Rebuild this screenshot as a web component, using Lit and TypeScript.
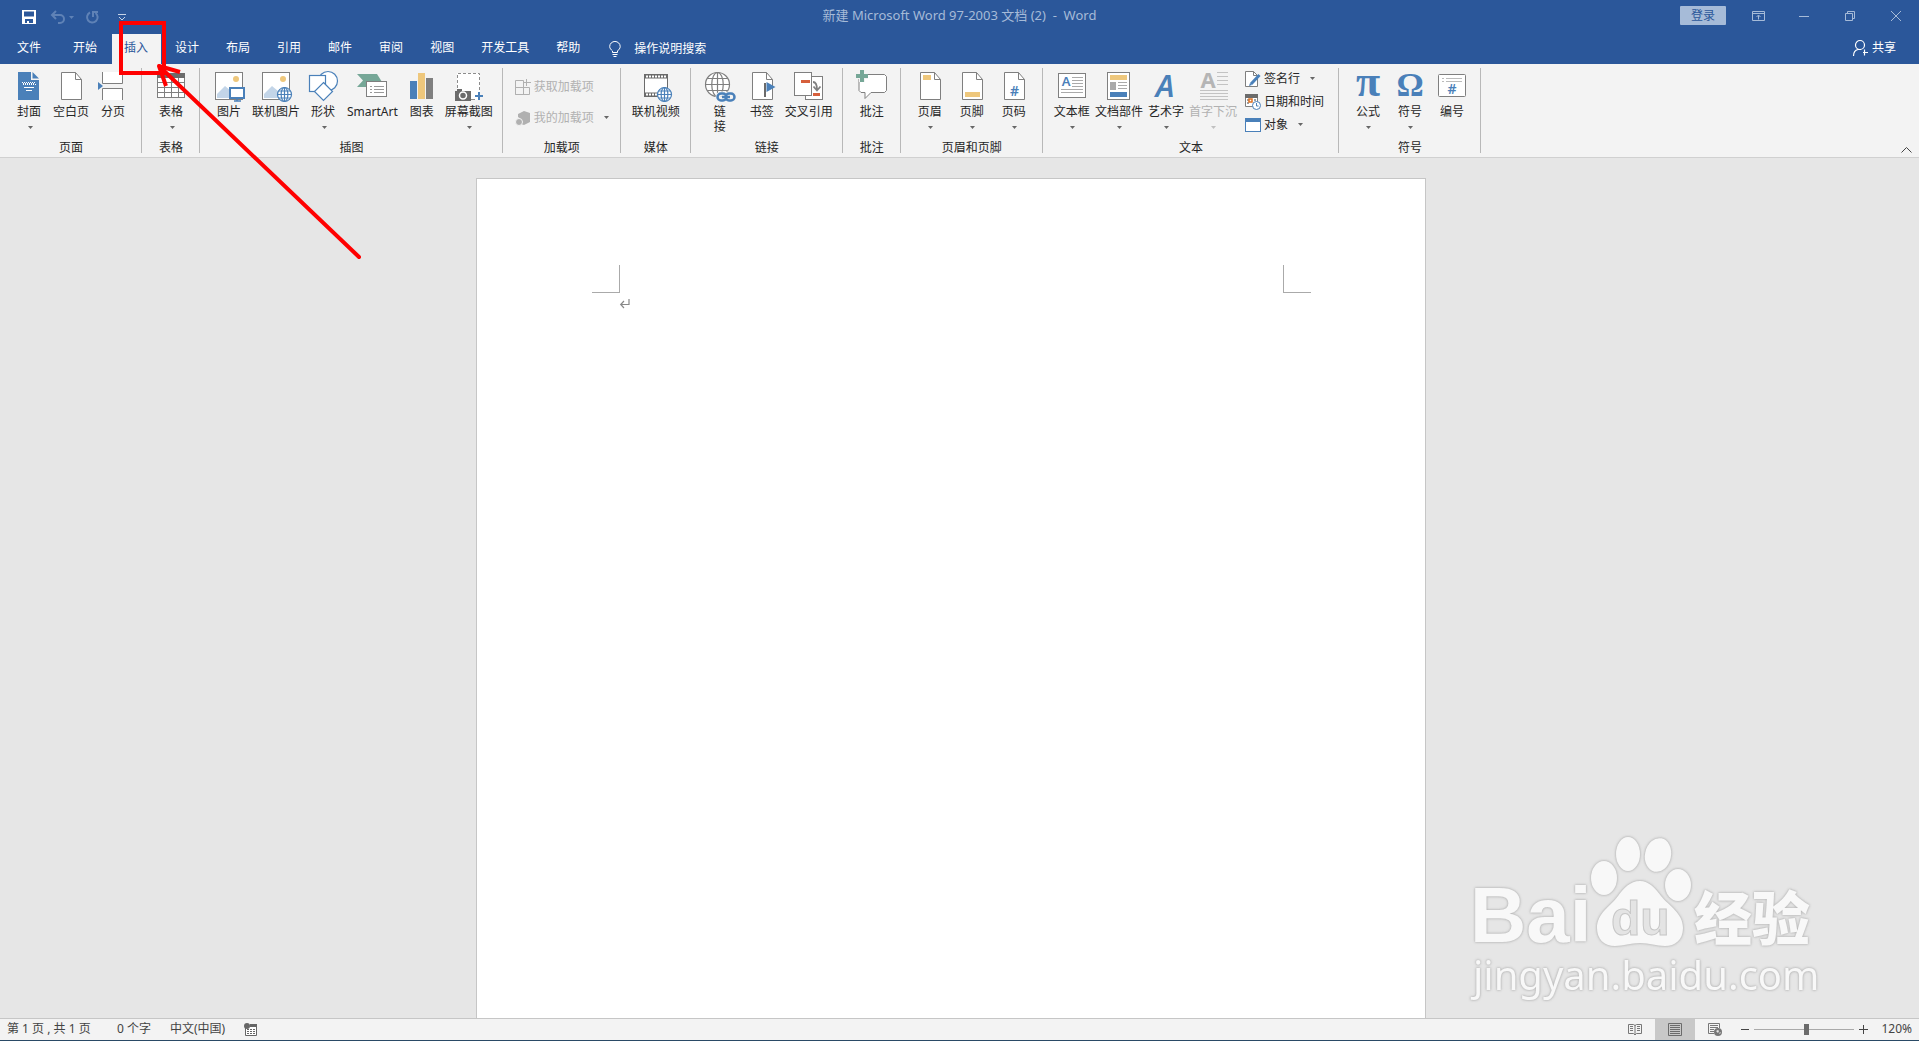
import { LitElement, html, css, svg, nothing } from "lit";
import { customElement, property } from "lit/decorators.js";
import { classMap } from "lit/directives/class-map.js";

const BLUE = "#4a80b9";
const GRAY = "#7f7f7f";
const GOLD = "#eec77c";
const GREEN = "#76a797";
const ORANGE = "#d65f3c";

const globe = (cx: number, cy: number, r: number, color: string) => svg`
  <g fill="none" stroke=${color} stroke-width="1.2">
    <circle cx=${cx} cy=${cy} r=${r} fill="#fff"/>
    <ellipse cx=${cx} cy=${cy} rx=${r * 0.48} ry=${r}/>
    <path d=${`M${cx} ${cy - r}V${cy + r}M${cx - r} ${cy}H${cx + r}M${cx - r * 0.86} ${cy - r / 2}H${cx + r * 0.86}M${cx - r * 0.86} ${cy + r / 2}H${cx + r * 0.86}`}/>
  </g>`;

const sheet = svg`
  <path d="M6.5 2.5h14l6 7v20h-20z" fill="#fff" stroke=${GRAY}/>
  <path d="M20.5 2.5v7h6" fill="none" stroke=${GRAY}/>`;

const photo = svg`
  <rect x="2.5" y="2.5" width="27" height="27" fill="#fff" stroke=${GRAY}/>
  <circle cx="23" cy="9" r="3" fill=${GOLD}/>
  <path d="M4 28v-4l8-8 6 5v7z" fill="#c3d5e8"/>`;

const icons: Record<string, unknown> = {
  cover: svg`
    <path d="M5 2h13v8h8v20H5z" fill=${BLUE}/><path d="M19.500 2v6.500H26z" fill=${BLUE}/>
    <path d="M9 12.500h13M10 14.500h13" stroke="#fff" stroke-dasharray="1 1"/>
    <path d="M9 13.500h13" stroke="#fff" stroke-dasharray="1 1" stroke-dashoffset="1"/>
    <path d="M11 17.500h10M13 20.500h6" stroke="#fff"/>`,
  blank: sheet,
  break: svg`
    <path d="M5.500 2v11.500h20V2" fill="#fff" stroke=${GRAY}/>
    <path d="M5.500 30V18.500h20V30" fill="#fff" stroke=${GRAY}/>
    <path d="M1 12l5 4-5 4z" fill=${BLUE}/>`,
  table: svg`
    <rect x="2.500" y="3.500" width="27" height="24" fill="#fff" stroke=${GRAY}/>
    <rect x="2" y="3" width="28" height="5" fill="#6b6b6b"/>
    <path d="M2 12.500h28M2 17.500h28M2 22.500h28M9.500 8v20M16.500 8v20M23.500 8v20" stroke=${GRAY} fill="none"/>`,
  picture: svg`${photo}
    <rect x="17" y="18" width="14" height="10" fill="#fff" stroke=${BLUE} stroke-width="2"/>
    <path d="M24 29v2M21 31h7" stroke=${BLUE} stroke-width="1.500"/>`,
  onlinePicture: svg`${photo}${globe(24.5, 24.5, 7, BLUE)}`,
  shapes: svg`
    <g fill="#fff" stroke=${BLUE} stroke-width="1.200"><circle cx="21" cy="11" r="9.500"/>
    <rect x="2.500" y="5.500" width="16" height="16"/><path d="M16.500 12.500l9 9-9 9-9-9z"/></g>`,
  smartArt: svg`
    <path d="M1 4h20l5 8-4 5H1l6-6.500z" fill=${GREEN}/>
    <rect x="10.500" y="11.500" width="20" height="15" fill="#fff" stroke=${GRAY}/>
    <path d="M14 16.500h2M14 19.500h2M14 22.500h2M18 16.500h10M18 19.500h10M18 22.500h10" stroke="#999"/>`,
  chart: svg`
    <path d="M4 11h7v18H4z" fill=${BLUE}/><path d="M12 3h7v26h-7z" fill=${GOLD}/>
    <path d="M20 8h7v21h-7z" fill=${GRAY}/>`,
  screenshot: svg`
    <path d="M4 3h23v27H4z" fill="#fff"/>
    <path d="M4.500 18V3.500h22V20" fill="none" stroke="#8c8c8c" stroke-dasharray="3 2"/>
    <path d="M18 29.500h4" stroke="#8c8c8c"/>
    <path d="M4 19h5v2h9v10H2V21h2z" fill="#6b6b6b"/>
    <circle cx="10" cy="25.500" r="3.500" fill="none" stroke="#fff" stroke-width="1.500"/>
    <path d="M26 22v8M22 26h8" stroke=${BLUE} stroke-width="2"/>`,
  video: svg`
    <rect x="4.500" y="4.500" width="23" height="22" fill="#fff" stroke="#6b6b6b"/>
    <path d="M5 6.500h22M5 24.500h22" stroke="#6b6b6b" stroke-width="4"/>
    <path d="M6 6.500h21M6 24.500h21" stroke="#fff" stroke-width="2" stroke-dasharray="2 1"/>
    ${globe(24.5, 24.5, 7, BLUE)}`,
  link: svg`
    ${globe(13.5, 14.5, 12, GRAY)}
    <g fill="none" stroke="#f3f3f3" stroke-width="5"><rect x="14" y="24" width="9" height="6" rx="3"/><rect x="21" y="24" width="9" height="6" rx="3"/></g>
    <g fill="none" stroke=${BLUE} stroke-width="2.500"><rect x="13.500" y="23.500" width="9" height="7" rx="3.500"/><rect x="21.500" y="23.500" width="9" height="7" rx="3.500"/><path d="M18 27h8"/></g>`,
  bookmark: svg`${sheet}
    <path d="M19 13v14" stroke="#6b6b6b" stroke-width="2"/><path d="M20.500 12l9 5-9 5z" fill=${BLUE}/>`,
  crossRef: svg`
    <rect x="12.500" y="6.500" width="17" height="23" fill="#fff" stroke=${GRAY}/>
    <rect x="1.500" y="2.500" width="17" height="23" fill="#fff" stroke=${GRAY}/>
    <path d="M8 10h9v3H8zM20 23h7v3h-7z" fill=${ORANGE}/>
    <path d="M20 12c3 0 4 3 4 8M20.500 16.500l3.500 4 3.500-4" fill="none" stroke=${GRAY} stroke-width="1.800"/>`,
  comment: svg`
    <path d="M4.500 4.500h24l2 2v14l-2 2H15l-6 6v-6H5l-2-2v-14z" fill="#fff" stroke=${GRAY}/>
    <path d="M6 0v12M0 6h12" stroke="#f3f3f3" stroke-width="6"/>
    <path d="M6 0v12M0 6h12" stroke=${GREEN} stroke-width="4"/>`,
  header: svg`${sheet}<path d="M9 5h8v5H9z" fill=${GOLD}/>`,
  footer: svg`${sheet}<path d="M9 22h15v5H9z" fill=${GOLD}/>`,
  pageNumber: svg`${sheet}<text class="glyph hash" x="16.500" y="26">#</text>`,
  textBox: svg`
    <rect x="2.500" y="3.500" width="27" height="24" fill="#fff" stroke=${GRAY}/>
    <text class="glyph letter" x="10" y="16">A</text>
    <path d="M16 7.500h11M16 10.500h11M16 13.500h11M16 16.500h11M5 19.500h22M5 22.500h22" stroke="#aaa"/>`,
  parts: svg`
    <rect x="4.500" y="2.500" width="22" height="27" fill="#fff" stroke=${GRAY}/>
    <path d="M7 5h17v5H7z" fill=${GOLD}/><path d="M7 12h6v8H7z" fill="#aaa"/>
    <path d="M15 12.500h9M15 15.500h9M15 18.500h9" stroke="#aaa"/><path d="M7 22h17v5H7z" fill=${BLUE}/>`,
  wordArt: svg`<text class="glyph art" x="15" y="27">A</text>`,
  dropCap: svg`
    <text class="glyph cap" x="11" y="18">A</text>
    <path d="M20 2.500h11M20 6.500h11M20 10.500h11M20 14.500h11M3 20.500h28M3 23.500h28M3 26.500h28M3 29.500h28" stroke="#c3c3c3"/>`,
  pi: svg`<text class="glyph pi" x="16" y="26">π</text>`,
  omega: svg`<text class="glyph omega" x="16" y="26">Ω</text>`,
  numbering: svg`
    <rect x="2.500" y="4.500" width="27" height="22" rx="1" fill="#fff" stroke=${GRAY}/>
    <path d="M6 8.500h2M10 8.500h16M6 11.500h2M10 11.500h16" stroke="#bbb"/>
    <text class="glyph hash" x="16" y="24">#</text>`,
};

const smallIcons: Record<string, unknown> = {
  getAddins: svg`<path d="M.5 1.500h8v14h-8zM.5 8.500h14v7h-14zM11.500 0v7M8 3.500h8" fill="none" stroke="#b0b0b0"/>`,
  myAddins: svg`<path d="M9 1l6 2v9l-6 3-3-1V9L3 7V4z" fill="#b0b0b0"/><circle cx="4" cy="12" r="3.500" fill="#b0b0b0" stroke="#f3f3f3"/>`,
  signature: svg`
    <path d="M.5 .5h8l4 4v11H.5z" fill="#fff" stroke=${GRAY}/><path d="M8.500 .5v4h4" fill="none" stroke=${GRAY}/>
    <path d="M14.500 4L6 13" stroke=${BLUE} stroke-width="3"/><path d="M4 15l1-3 2 2z" fill=${BLUE}/>`,
  date: svg`
    <path d="M.5 1.500h12v11H.5z" fill="#fff" stroke=${GRAY}/><path d="M0 0h13v4H0z" fill="#6b6b6b"/>
    <path d="M2 6h2M2 9h2M9 6h2" stroke=${GRAY} stroke-width="1.500"/>
    <rect x="4" y="5" width="3" height="3" fill="#fff" stroke="#e07020" stroke-width="1.500"/>
    <circle cx="11.500" cy="11.500" r="4" fill="#fff" stroke=${BLUE}/><path d="M11.500 9v3h2" fill="none" stroke=${BLUE}/>`,
  object: svg`<rect x=".5" y="1.500" width="15" height="13" fill="#fff" stroke=${BLUE}/><path d="M0 1h16v4H0z" fill=${BLUE}/>`,
};

interface Item { icon: string; label: string; menu?: boolean; off?: boolean; narrow?: boolean; wide?: boolean }
interface Group { name: string; items: Item[]; rows?: Item[]; loose?: boolean }

const groups: Group[] = [
  { name: "页面", items: [{ icon: "cover", label: "封面", menu: true }, { icon: "blank", label: "空白页" }, { icon: "break", label: "分页" }] },
  { name: "表格", items: [{ icon: "table", label: "表格", menu: true }] },
  { name: "插图", items: [{ icon: "picture", label: "图片" }, { icon: "onlinePicture", label: "联机图片" }, { icon: "shapes", label: "形状", menu: true }, { icon: "smartArt", label: "SmartArt", wide: true }, { icon: "chart", label: "图表" }, { icon: "screenshot", label: "屏幕截图", menu: true }] },
  { name: "加载项", items: [], loose: true, rows: [{ icon: "getAddins", label: "获取加载项", off: true }, { icon: "myAddins", label: "我的加载项", off: true, menu: true }] },
  { name: "媒体", items: [{ icon: "video", label: "联机视频", wide: true }] },
  { name: "链接", items: [{ icon: "link", label: "链接", narrow: true }, { icon: "bookmark", label: "书签" }, { icon: "crossRef", label: "交叉引用" }] },
  { name: "批注", items: [{ icon: "comment", label: "批注" }] },
  { name: "页眉和页脚", items: [{ icon: "header", label: "页眉", menu: true }, { icon: "footer", label: "页脚", menu: true }, { icon: "pageNumber", label: "页码", menu: true }] },
  { name: "文本", items: [{ icon: "textBox", label: "文本框", menu: true }, { icon: "parts", label: "文档部件", menu: true }, { icon: "wordArt", label: "艺术字", menu: true }, { icon: "dropCap", label: "首字下沉", menu: true, off: true }],
    rows: [{ icon: "signature", label: "签名行", menu: true }, { icon: "date", label: "日期和时间" }, { icon: "object", label: "对象", menu: true }] },
  { name: "符号", items: [{ icon: "pi", label: "公式", menu: true }, { icon: "omega", label: "符号", menu: true }, { icon: "numbering", label: "编号" }] },
];

const base = css`
  * { box-sizing: border-box; }
  button, input { font: inherit; color: inherit; background: none; border: 0; padding: 0; margin: 0; }
  svg { display: block; flex: none; overflow: visible; }
`;

const caret = html`<svg class="caret" width="5" height="3" viewBox="0 0 5 3"><path d="M0 0h5L2.500 3z" fill="currentColor"/></svg>`;

@customElement("ribbon-group")
class RibbonGroup extends LitElement {
  @property({ attribute: false }) group!: Group;

  static styles = [base, css`
    :host { display: flex; flex-direction: column; height: 85px; padding: 0 7px 0 8px; border-right: 1px solid #b8b8b8; }
    .body { display: flex; flex: 1; }
    .big { display: flex; flex-direction: column; align-items: center; min-width: 42px; padding: 2px 2px 0; line-height: 15px; white-space: nowrap; }
    .wide { padding: 2px 3px 0; }
    .big .label { margin-top: 2px; }
    .big .caret { margin: 7px 0 0 2px; }
    .narrow .label { width: 12px; white-space: normal; }
    .caret { color: #666; }
    .off { color: #b1b1b1; }
    .off .caret { color: #c0c0c0; }
    .rows { display: flex; flex-direction: column; padding: 0 7px 0 6px; }
    .row { display: flex; align-items: center; gap: 3px; height: 23px; padding-bottom: 2px; white-space: nowrap; }
    .row .caret { margin-left: 7px; }
    .loose { padding: 3px 4px 0; }
    .loose .row { height: 31px; padding-bottom: 0; }
    .loose .caret { color: #666; }
    .name { text-align: center; line-height: 10px; }
    .glyph { font-family: "Noto Sans", sans-serif; font-weight: 600; text-anchor: middle; fill: #4a80b9; }
    .hash { font-size: 14px; }
    .letter { font-size: 13px; }
    .art { font-size: 31px; font-style: italic; }
    .cap { font-size: 22px; font-weight: 700; fill: #b5b5b5; }
    .pi { font-family: "Liberation Serif", serif; font-size: 44px; font-weight: 700; }
    .omega { font-family: "Liberation Serif", serif; font-size: 34px; font-weight: 700; }
  `];

  render() {
    const { name, items, rows, loose } = this.group;
    return html`
      <div class="body">
        ${items.map((i) => html`
          <button class=${classMap({ big: true, off: !!i.off, narrow: !!i.narrow, wide: !!i.wide })} ?disabled=${i.off}>
            <svg width="32" height="32" viewBox="0 0 32 32">${icons[i.icon]}</svg>
            <span class="label">${i.label}</span>${i.menu ? caret : nothing}
          </button>`)}
        ${rows ? html`<div class=${classMap({ rows: true, loose: !!loose })}>
          ${rows.map((i) => html`
            <button class=${classMap({ row: true, off: !!i.off })} ?disabled=${i.off}>
              <svg width="16" height="16" viewBox="0 0 16 16">${smallIcons[i.icon]}</svg>
              <span>${i.label}</span>${i.menu ? caret : nothing}
            </button>`)}</div>` : nothing}
      </div>
      <div class="name">${name}</div>`;
  }
}

@customElement("baidu-mark")
class BaiduMark extends LitElement {
  static styles = css`
    :host { display: block; }
    svg { display: block; overflow: visible; filter: drop-shadow(0 0 1px #b4b4b4) drop-shadow(0 0 1px #c8c8c8); }
    text { fill: #f8f8f8; }
    .bai { font: 700 78px "Liberation Sans", sans-serif; }
    .du { font: 700 48px "Liberation Sans", sans-serif; fill: #e4e4e4; stroke: #c6c6c6; stroke-width: 1px; }
    .cn { font: 900 58px "Noto Sans CJK SC", sans-serif; }
    .url { font: 400 40px "Noto Sans", sans-serif; }
  `;
  render() {
    return html`<svg width="350" height="170" viewBox="0 0 350 170">
      <text class="bai" x="0" y="108">Bai</text>
      <g fill="#f8f8f8">
        <ellipse cx="134" cy="44" rx="13" ry="17"/>
        <ellipse cx="158" cy="20" rx="12" ry="17"/>
        <ellipse cx="188" cy="21" rx="13" ry="17" transform="rotate(12 188 21)"/>
        <ellipse cx="208" cy="51" rx="13" ry="16"/>
        <path d="M170 47c9 0 15 7 21 15 8 10 22 17 22 32 0 12-8 18-18 18-9 0-15-3-25-3s-16 3-25 3c-11 0-18-7-18-18 0-15 13-21 21-32 6-8 12-15 22-15z"/>
      </g>
      <text class="du" x="141" y="101">du</text>
      <text class="cn" x="224" y="106">经验</text>
      <text class="url" x="3" y="156">jingyan.baidu.com</text>
    </svg>`;
  }
}

@customElement("app-root")
class AppRoot extends LitElement {
  static styles = [base, css`
    :host { display: flex; flex-direction: column; min-height: 100vh; position: relative; overflow: hidden; background: #e6e6e6; color: #262626; font: 12px/16px "Noto Sans", "Noto Sans CJK SC", sans-serif; }
    .title { display: grid; grid-template-columns: 1fr auto 1fr; height: 34px; background: #2b579a; color: #a6bbd8; }
    .quick { display: flex; align-items: center; padding: 0 0 0 22px; }
    .quick .dim { color: #5f82b6; }
    .undo { margin-left: 15px; }
    .quick .caret { margin-left: 4px; color: #5f82b6; }
    .redo { margin-left: 11px; }
    .more { margin-left: 19px; }
    .doc { padding-top: 7px; font-size: 13px; white-space: pre; }
    .window { display: flex; justify-content: flex-end; height: 31px; }
    .login { width: 46px; height: 19px; margin: 6px 9px 0 0; line-height: 18px; border-radius: 1px; background: #a6bbd8; color: #2b579a; }
    .win { display: flex; align-items: center; justify-content: center; width: 46px; }
    .tabs { display: flex; height: 30px; background: #2b579a; color: #fff; padding-right: 23px; }
    .tab { display: flex; align-items: center; margin-right: 2px; padding: 0 13px 2px 12px; color: inherit; text-decoration: none; }
    .file { margin-right: 3px; padding: 0 17px 2px; }
    .active { background: #f3f3f3; color: #2b579a; }
    .tell { display: flex; flex: 1; align-items: center; gap: 13px; padding-left: 14px; }
    .tell input { width: 160px; outline: 0; }
    .tell input::placeholder { color: #fff; opacity: 1; }
    .share { display: flex; align-items: center; gap: 4px; padding-bottom: 2px; }
    .ribbon { display: flex; padding: 4px 0; background: #f3f3f3; border-bottom: 1px solid #d0d0d0; }
    .collapse { align-self: flex-end; margin: 0 7px 0 auto; }
    .canvas { display: flex; flex: 1; justify-content: center; padding: 20px 17px 0 0; }
    .page { width: 950px; background: #fff; border: 1px solid #c6c6c6; border-bottom: 0; padding: 86px 114px 0 115px; }
    .marks { display: flex; justify-content: space-between; }
    .corner { width: 28px; height: 28px; border-bottom: 1px solid #aaa; }
    .left { border-right: 1px solid #aaa; }
    .right { border-left: 1px solid #aaa; }
    .pilcrow { margin: 6px 0 0 28px; }
    .status { display: flex; align-items: stretch; height: 23px; background: #f3f3f3; border-top: 1px solid #c6c6c6; border-bottom: 1px solid #2a4a66; color: #444; }
    .info { display: flex; flex: 1; align-items: center; gap: 19px; padding: 0 0 1px 7px; }
    .pages { min-width: 91px; }
    .view { display: flex; align-items: center; justify-content: center; width: 40px; }
    .current { background: #c8c8c8; }
    .zoom { display: flex; align-items: center; gap: 5px; padding: 0 7px 1px 5px; }
    .step { width: 9px; height: 16px; display: flex; align-items: center; justify-content: center; }
    .percent { width: 31px; margin-left: 8px; text-align: right; }
    .slider { appearance: none; width: 100px; height: 16px; background: linear-gradient(#aaa, #aaa) center / 100% 1px no-repeat; }
    .slider::-webkit-slider-thumb { appearance: none; width: 5px; height: 11px; background: #6b6b6b; }
    .watermark { position: absolute; right: 99px; bottom: 37px; }
    .note { position: absolute; left: 112px; top: 16px; pointer-events: none; }
  `];

  render() {
    const tabs = ["开始", "插入", "设计", "布局", "引用", "邮件", "审阅", "视图", "开发工具", "帮助"];
    return html`
      <header class="title">
        <div class="quick">
          <button aria-label="保存"><svg width="14" height="14" viewBox="0 0 14 14"><path d="M0 0h14v14H0zM2 1.500v5h10v-5zM3 9v4h2v-2h2v2h4V9z" fill="#fff" fill-rule="evenodd"/></svg></button>
          <button class="undo dim" aria-label="撤消"><svg width="14" height="14" viewBox="0 0 14 14"><path d="M1 5h8a4 4 0 0 1 0 8H7M5 1L1 5l4 4" fill="none" stroke="currentColor" stroke-width="2"/></svg></button>${caret}
          <button class="redo dim" aria-label="重复"><svg width="14" height="14" viewBox="0 0 14 14"><path d="M5 2.500A5.300 5.300 0 1 0 10.500 3M8 7V2h5" fill="none" stroke="currentColor" stroke-width="2"/></svg></button>
          <button class="more" aria-label="自定义快速访问工具栏"><svg width="8" height="7" viewBox="0 0 8 7"><path d="M0 .5h8M1 3l3 3 3-3" fill="none" stroke="#c4d2e6"/></svg></button>
        </div>
        <div class="doc">新建 Microsoft Word 97-2003 文档 (2)  -  Word</div>
        <div class="window">
          <button class="login">登录</button>
          <button class="win" aria-label="功能区显示选项"><svg width="13" height="10" viewBox="0 0 13 10"><path d="M.5 .5h12v9H.5zM0 2.500h13M6.500 8.500v-4M4.500 6l2-2 2 2" fill="none" stroke="currentColor"/></svg></button>
          <button class="win" aria-label="最小化"><svg width="10" height="10" viewBox="0 0 10 10"><path d="M0 5.500h10" stroke="currentColor"/></svg></button>
          <button class="win" aria-label="还原"><svg width="10" height="10" viewBox="0 0 10 10"><path d="M.5 2.500h7v7h-7zM2.500 2.500v-2h7v7h-2" fill="none" stroke="currentColor"/></svg></button>
          <button class="win" aria-label="关闭"><svg width="10" height="10" viewBox="0 0 10 10"><path d="M0 0l10 10M10 0L0 10" stroke="currentColor"/></svg></button>
        </div>
      </header>
      <nav class="tabs">
        <a class="tab file" href="#file">文件</a>
        ${tabs.map((t) => html`<a class=${classMap({ tab: true, active: t === "插入" })} href="#tab">${t}</a>`)}
        <label class="tell">
          <svg width="12" height="16" viewBox="0 0 12 16"><path d="M3.500 11.500V10C2 8.500 .7 7.500 .7 5.500a5.200 5 0 0 1 10.500 0c0 2-1.300 3-2.700 4.500v1.500zM3.500 13.500h5M4.500 15.500h3" fill="none" stroke="#fff"/></svg>
          <input type="text" placeholder="操作说明搜索" aria-label="操作说明搜索">
        </label>
        <button class="share"><svg width="15" height="16" viewBox="0 0 15 16"><path d="M.5 16c0-4 2-6 4.500-6.500h3M10 12.500h5M11.500 9.500v6" fill="none" stroke="#fff" stroke-width="1.200"/><circle cx="7" cy="5" r="4.500" fill="none" stroke="#fff" stroke-width="1.200"/></svg>共享</button>
      </nav>
      <section class="ribbon">
        ${groups.map((g) => html`<ribbon-group .group=${g}></ribbon-group>`)}
        <button class="collapse" aria-label="折叠功能区"><svg width="11" height="6" viewBox="0 0 11 6"><path d="M.5 5.500l5-5 5 5" fill="none" stroke="#444"/></svg></button>
      </section>
      <main class="canvas">
        <div class="page">
          <div class="marks"><div class="corner left"></div><div class="corner right"></div></div>
          <svg class="pilcrow" width="11" height="10" viewBox="0 0 11 10"><path d="M9 0v5.500H1M4 2L.7 5.500 4 9" fill="none" stroke="#888" stroke-width="1.200"/></svg>
        </div>
      </main>
      <footer class="status">
        <div class="info">
          <span class="pages">第 1 页 , 共 1 页</span><span>0 个字</span><span>中文(中国)</span>
          <svg width="13" height="13" viewBox="0 0 13 13"><path d="M1.500 5v7.500h11V1" fill="#fff" stroke="#666"/><path d="M6 1h7v3H6z" fill="#666"/><circle cx="3" cy="3" r="3" fill="#666"/><path d="M3 6.500h8M3 8.500h8M3 10.500h8" stroke="#666" stroke-dasharray="2 1"/></svg>
        </div>
        <button class="view" aria-label="阅读视图"><svg width="14" height="13" viewBox="0 0 14 13"><path d="M.5 1.500h5L7 2.500l1.500-1h5v9h-5L7 12l-1.500-1.500h-5zM7 2v10M2 3.500h3M2 5.500h3M2 7.500h3M9 3.500h3M9 5.500h3M9 7.500h3" fill="none" stroke="#777"/></svg></button>
        <button class="view current" aria-label="页面视图"><svg width="14" height="13" viewBox="0 0 14 13"><path d="M.5 .5h13v12H.5zM2 2.500h10M2 4.500h10M2 6.500h10M2 8.500h10M2 10.500h10" fill="none" stroke="#6b6b6b"/></svg></button>
        <button class="view" aria-label="Web 版式视图"><svg width="14" height="13" viewBox="0 0 14 13"><path d="M6 10.500H.5V.5h11V5M2 2.500h8M2 4.500h8M2 6.500h4M2 8.500h4" fill="none" stroke="#777"/><circle cx="10" cy="9" r="4" fill="#777"/><path d="M8 8l2-1 1 1-1 2zM11 10l2-1-1 2z" fill="#e8e8e8"/></svg></button>
        <div class="zoom">
          <button class="step" aria-label="缩小"><svg width="8" height="9" viewBox="0 0 8 9"><path d="M0 4.500h8" stroke="#444"/></svg></button>
          <input class="slider" type="range" min="10" max="217" value="120" aria-label="显示比例">
          <button class="step" aria-label="放大"><svg width="9" height="9" viewBox="0 0 9 9"><path d="M0 4.500h9M4.500 0v9" stroke="#444"/></svg></button>
          <span class="percent">120%</span>
        </div>
      </footer>
      <baidu-mark class="watermark"></baidu-mark>
      <svg class="note" width="260" height="250" viewBox="112 16 260 250" fill="none" stroke="#f00" stroke-width="4">
        <rect x="121" y="23" width="43" height="50"/>
        <path d="M160 67L359 257" stroke-linecap="round"/>
        <path d="M180 72L159 66L166 86" stroke-linejoin="round"/>
      </svg>`;
  }
}
